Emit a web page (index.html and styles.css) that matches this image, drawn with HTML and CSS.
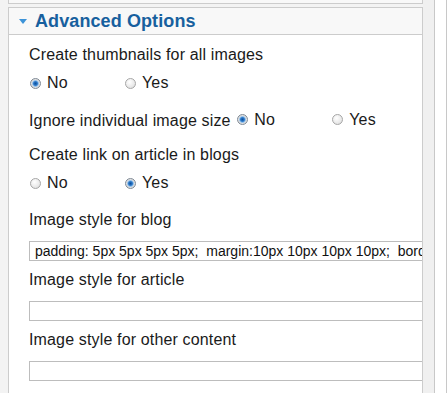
FILE: index.html
```html
<!DOCTYPE html>
<html lang="en">
<head>
    <meta charset="UTF-8">
    <meta name="viewport" content="width=device-width, initial-scale=1.0">
    <title>Advanced Options</title>
    <link rel="stylesheet" href="styles.css">
</head>
<body>
    <div class="page">
        <div class="main">
            <div class="panel panel-prev"></div>
            <div class="panel">
                <h3 class="panel-title"><span class="arrow"></span>Advanced Options</h3>
                <div class="panel-body">
                    <div class="field field-radio">
                        <div class="label">Create thumbnails for all images</div>
                        <div class="options">
                            <label class="option"><input type="radio" name="thumbs" checked>No</label>
                            <label class="option"><input type="radio" name="thumbs">Yes</label>
                        </div>
                    </div>
                    <div class="field field-inline">
                        <span class="label">Ignore individual image size</span>
                        <span class="options">
                            <label class="option"><input type="radio" name="ignore" checked>No</label>
                            <label class="option"><input type="radio" name="ignore">Yes</label>
                        </span>
                    </div>
                    <div class="field field-radio">
                        <div class="label">Create link on article in blogs</div>
                        <div class="options">
                            <label class="option"><input type="radio" name="link">No</label>
                            <label class="option"><input type="radio" name="link" checked>Yes</label>
                        </div>
                    </div>
                    <div class="field field-text">
                        <div class="label">Image style for blog</div>
                        <input type="text" class="text-input" value="padding: 5px 5px 5px 5px;  margin:10px 10px 10px 10px;  border: 1px solid #ccc;">
                    </div>
                    <div class="field field-text">
                        <div class="label">Image style for article</div>
                        <input type="text" class="text-input" value="">
                    </div>
                    <div class="field field-text">
                        <div class="label">Image style for other content</div>
                        <input type="text" class="text-input" value="">
                    </div>
                </div>
            </div>
        </div>
        <div class="side-strip"></div>
        <div class="side-blank"></div>
    </div>
</body>
</html>
```

FILE: styles.css
```css
body {
    margin: 0;
    padding: 0;
    font-family: 'Liberation Sans', Arial, sans-serif;
    color: #1a1a1a;
    background: #fff;
}

.page {
    display: flex;
    height: 393px;
    overflow: hidden;
}

.main {
    width: 423px;
    padding-left: 8px;
    box-sizing: border-box;
    background: #f3f3f3;
}

.side-strip {
    width: 11px;
    background: #f0f0f0;
    border-right: 1px solid #c8c8c8;
}

.side-blank {
    width: 11px;
    background: #fff;
    border-right: 1px solid #c8c8c8;
}

.panel {
    border: 1px solid #cccccc;
    background: #fff;
    overflow: hidden;
}

.panel-prev {
    height: 3px;
    border-top: none;
    background: #f8f8f8;
    margin-bottom: 3px;
}

.panel-title {
    margin: 0;
    height: 26px;
    display: flex;
    align-items: center;
    padding-left: 10px;
    background: #f8f8f8;
    border-bottom: 1px solid #cccccc;
    color: #17609e;
    font-size: 18px;
    font-weight: bold;
    line-height: 26px;
    letter-spacing: 0.1px;
}

.arrow {
    width: 0;
    height: 0;
    border-left: 4.5px solid transparent;
    border-right: 4.5px solid transparent;
    border-top: 5px solid #3d93d8;
    margin-right: 8px;
    margin-top: 1px;
}

.panel-body {
    padding: 11px 0 20px 20px;
    font-size: 16px;
    letter-spacing: 0.15px;
    line-height: 18px;
}

.field-radio .label {
    margin-bottom: 10px;
}

.field-radio {
    margin-bottom: 18px;
}

.field-inline {
    margin-bottom: 17px;
    white-space: nowrap;
}

.field-inline .options {
    margin-left: 1px;
}

.field-radio + .field-text {
    margin-top: 1px;
}

.field-text {
    margin-bottom: 10px;
}

.field-text .label {
    margin-bottom: 12px;
}

.options {
    display: inline-flex;
}

.option {
    display: inline-flex;
    align-items: center;
    width: 95px;
    height: 18px;
}

.option:last-child {
    width: auto;
}

.option input {
    appearance: none;
    -webkit-appearance: none;
    width: 11px;
    height: 11px;
    margin: 0 6px 0 1px;
    border-radius: 50%;
    border: 1px solid #a6a6a6;
    box-sizing: border-box;
    background: radial-gradient(circle at 40% 35%, #ffffff 0%, #e9e9e9 60%, #d4d4d4 100%);
}

.option input:checked {
    border-color: #7f8a96;
    background: radial-gradient(circle at 50% 50%, #0e4f9c 0%, #2a78c8 30%, #8fbde9 46%, #e2e2e2 60%, #cfcfcf 100%);
}

.text-input {
    display: block;
    width: calc(100% + 10px);
    height: 20px;
    box-sizing: border-box;
    margin: 0;
    padding: 0 0 0 5px;
    border: 1px solid #bdbdbd;
    font-family: 'Liberation Sans', Arial, sans-serif;
    font-size: 14px;
    color: #111;
    background: #fff;
    outline: none;
}
```
